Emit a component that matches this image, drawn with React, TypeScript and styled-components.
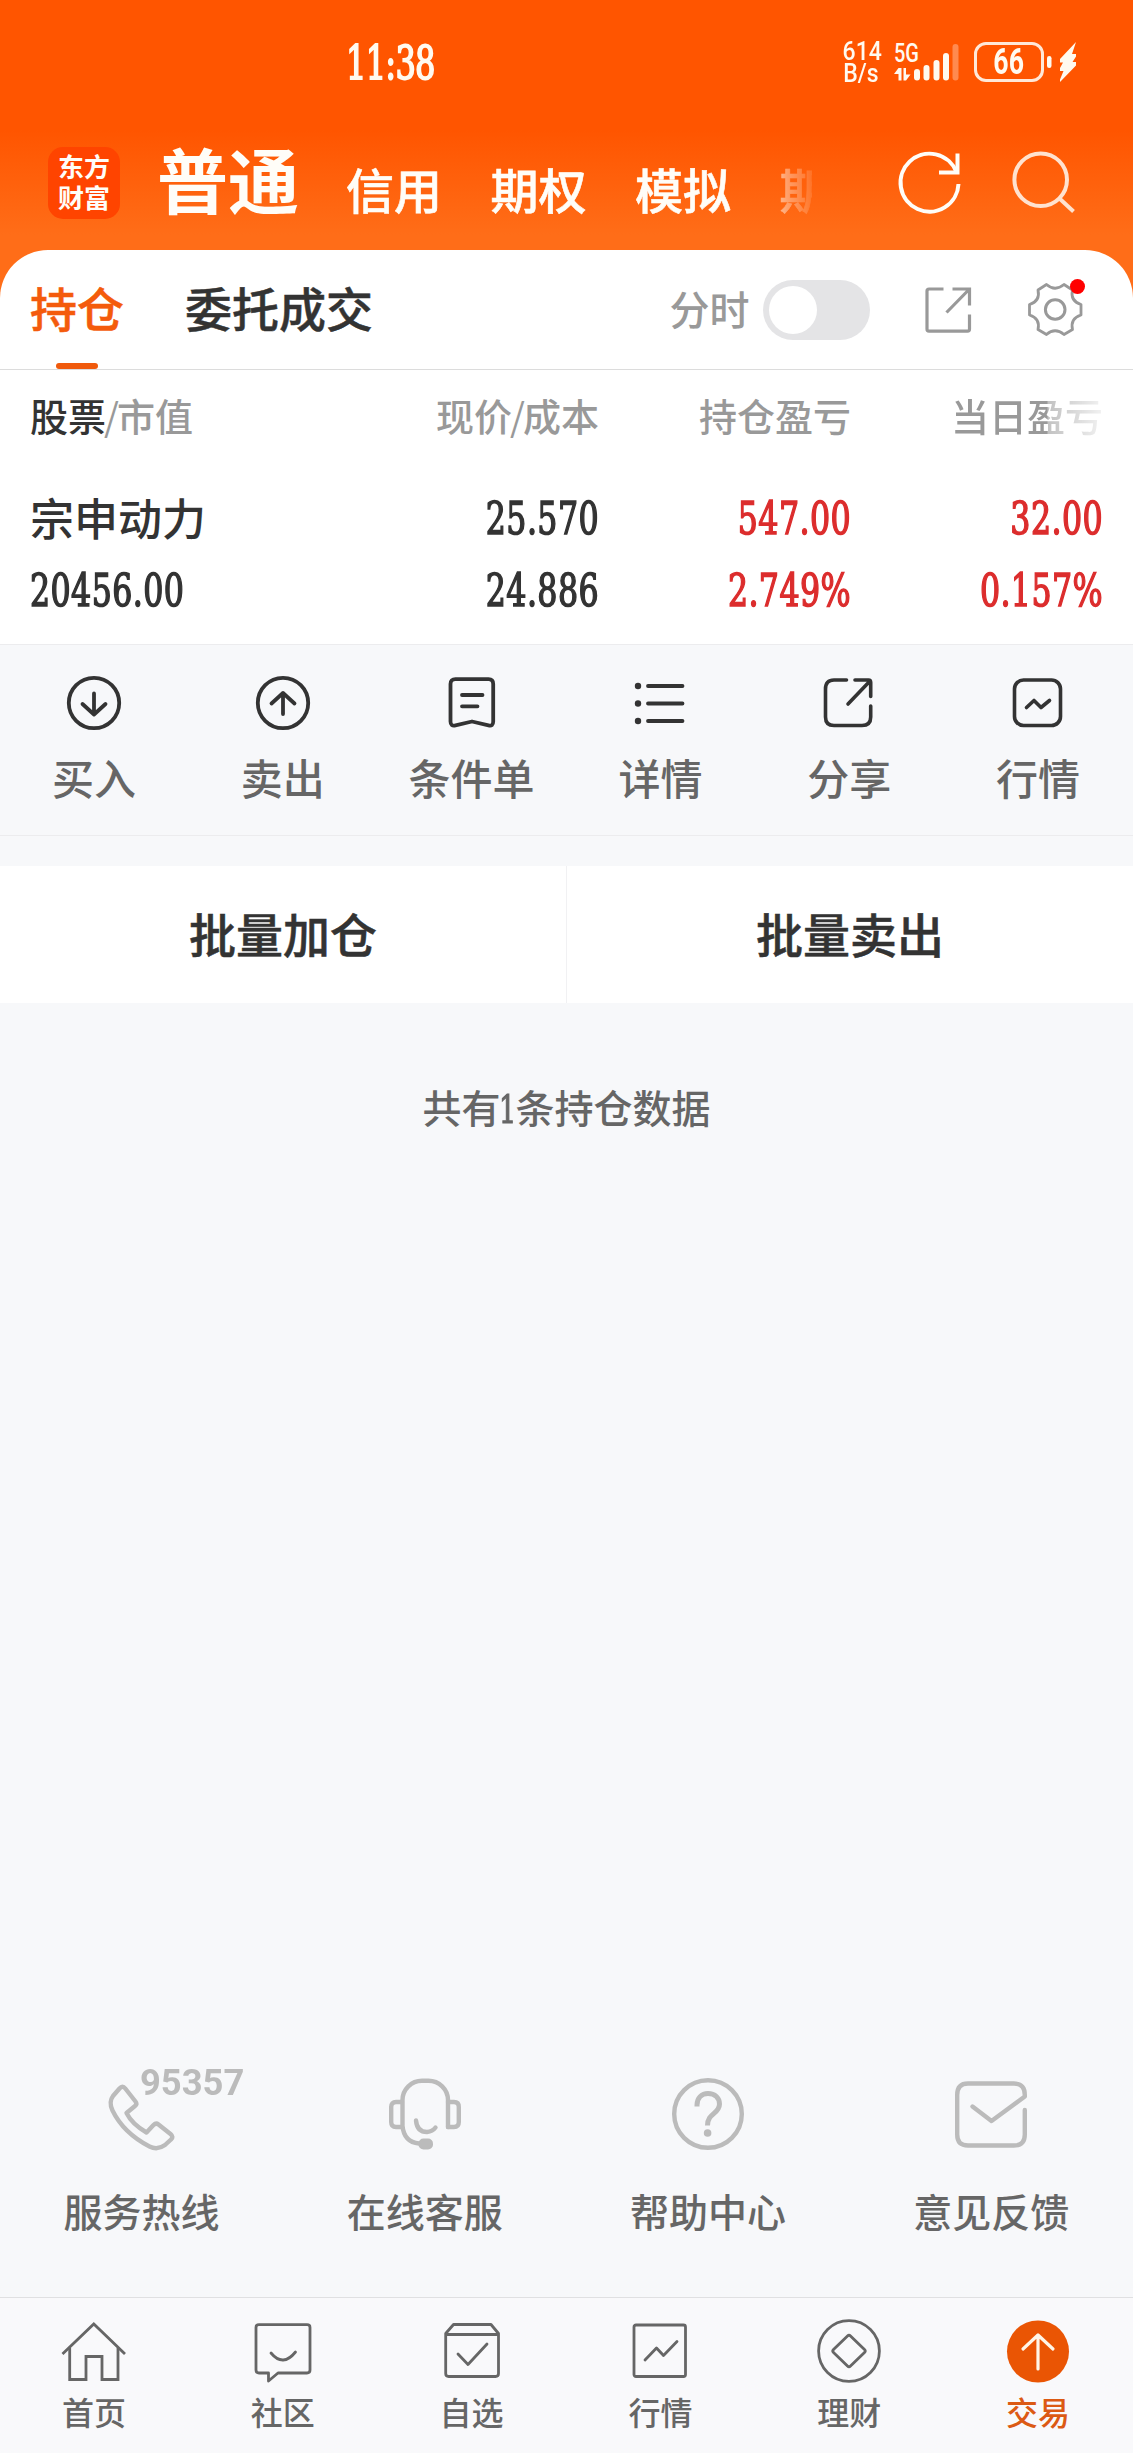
import React from "react";
import styled, { createGlobalStyle, css } from "styled-components";

const GlobalStyle = createGlobalStyle`
  *, *::before, *::after { box-sizing: border-box; }
  body {
    margin: 0;
    background: #f7f8fa;
    font-family: "Noto Sans CJK SC", sans-serif;
    font-weight: 500;
    color: #333;
  }
  svg { display: block; flex: none; }
`;

const numeric = css`
  font-family: "DejaVu Serif Condensed", "DejaVu Serif", serif;
  font-stretch: condensed;
  font-weight: 400;
`;

const Page = styled.div`
  width: 1133px;
  height: 2453px;
  display: flex;
  flex-direction: column;
  overflow: hidden;
  background: linear-gradient(#ff5500 0, #ff5500 130px, #ff6d18 235px, #ff6d18 320px, #f7f8fa 320px);
`;

/* ---------- status bar ---------- */

const StatusBar = styled.header`
  height: 125px;
  flex: none;
  display: flex;
  align-items: flex-start;
  color: #fffaf0;
`;

const Clock = styled.time`
  ${numeric}
  width: 88px;
  margin: 38px 0 0 346px;
  font-size: 47px;
  line-height: 50px;
  letter-spacing: -1px;
  white-space: nowrap;
  transform: scaleX(0.76);
  transform-origin: left center;
  -webkit-text-stroke: 1.8px currentColor;
`;

const NetSpeed = styled.div`
  width: 40px;
  margin: 41px 0 0 407px;
  font: 500 25px/22px Roboto, sans-serif;
  text-align: center;
  transform: scaleX(0.92);
`;

const Signal = styled.div`
  width: 65px;
  margin: 43px 0 0 13px;
`;

const BatteryBody = styled.div`
  width: 70px;
  height: 40px;
  margin: 42px 0 0 15px;
  display: flex;
  align-items: center;
  justify-content: center;
  border: 3.5px solid #ffe8d8;
  border-radius: 12px;
`;

const BatteryLevel = styled.span`
  font: 700 36px/36px Roboto, sans-serif;
  transform: scaleX(0.74);
`;

const Power = styled.div`
  margin: 42px 0 0 2px;
`;

/* ---------- account bar ---------- */

const AccountBar = styled.nav`
  height: 125px;
  flex: none;
  display: flex;
  align-items: flex-start;
  padding-left: 48px;
  color: #fffdf8;
`;

const Logo = styled.div`
  width: 72px;
  height: 72px;
  margin-top: 22px;
  padding-top: 3px;
  border-radius: 15px;
  background: #ff4400;
  font-size: 26px;
  font-weight: 700;
  line-height: 31px;
  text-align: center;
`;

const AccountTabs = styled.div`
  width: 655px;
  height: 125px;
  margin-left: 37px;
  display: flex;
  overflow: hidden;
  white-space: nowrap;
  mask-image: linear-gradient(90deg, #000 600px, rgba(0, 0, 0, 0.4) 630px, rgba(0, 0, 0, 0.12) 655px);
`;

const AccountTab = styled.span<{ $active?: boolean }>`
  flex: none;
  margin-right: ${(p) => (p.$active ? 47 : 48.5)}px;
  margin-top: ${(p) => (p.$active ? 2 : 28)}px;
  font-size: ${(p) => (p.$active ? 71 : 48)}px;
  font-weight: ${(p) => (p.$active ? 700 : 500)};
  line-height: ${(p) => (p.$active ? 100 : 70)}px;
  -webkit-text-stroke: ${(p) => (p.$active ? 0 : 0.6)}px currentColor;
`;

const BarIcon = styled.div<{ $left: number }>`
  margin: 27px 0 0 ${(p) => p.$left}px;
`;

/* ---------- holdings panel ---------- */

const Panel = styled.section`
  flex: none;
  height: 394px;
  border-radius: 48px 48px 0 0;
  background: #fff;
`;

const PanelTabs = styled.div`
  height: 120px;
  display: flex;
  align-items: flex-start;
  padding-left: 30px;
  border-bottom: 1px solid #dcdcdc;
`;

const PanelTab = styled.div<{ $active?: boolean }>`
  height: 119px;
  margin-right: 61px;
  padding-top: 22px;
  display: flex;
  flex-direction: column;
  justify-content: space-between;
  align-items: center;
  font-size: 47px;
  line-height: 70px;
  color: ${(p) => (p.$active ? "#f45b0c" : "#333")};
  -webkit-text-stroke: 0.5px currentColor;
  &::after {
    content: "";
    width: 42px;
    height: 6px;
    border-radius: 3px;
    background: ${(p) => (p.$active ? "#f05a0c" : "transparent")};
  }
`;

const Tools = styled.div`
  height: 119px;
  flex: 1;
  display: flex;
  align-items: center;
  justify-content: flex-end;
  padding-right: 51.5px;
  color: #999;
`;

const ToolLabel = styled.span`
  margin-top: -3px;
  font-size: 40px;
  line-height: 60px;
`;

const Toggle = styled.div`
  width: 107px;
  height: 60px;
  margin: 0 55px 0 13px;
  padding: 6px;
  border-radius: 30px;
  background: #e4e4e6;
  &::before {
    content: "";
    display: block;
    width: 48px;
    height: 48px;
    border-radius: 50%;
    background: #fff;
  }
`;

const Settings = styled.div`
  position: relative;
  margin-left: 57px;
  &::after {
    content: "";
    position: absolute;
    top: -4px;
    right: -3px;
    width: 15px;
    height: 15px;
    border-radius: 50%;
    background: #f00;
  }
`;

const Grid = styled.div`
  display: grid;
  grid-template-columns: 320px 249px 252px 252px;
  grid-template-rows: 107px 84px 60px;
  padding: 0 30px;
`;

const HeadCell = styled.div<{ $fade?: boolean }>`
  padding-top: 17px;
  font-size: 38px;
  line-height: 56px;
  color: #999;
  white-space: nowrap;
  text-align: right;
  &:first-child { text-align: left; }
  ${(p) => p.$fade && css`
    mask-image: linear-gradient(90deg, #000 196px, rgba(0, 0, 0, 0.6) 197px, rgba(0, 0, 0, 0.12) 252px);
  `}
  b { font-weight: 500; color: #333; }
`;

const Slash = styled.span`
  margin: 0 -2px;
  font-weight: 400;
`;

const StockName = styled.div`
  align-self: center;
  margin-top: -5px;
  font-size: 44px;
  line-height: 60px;
`;

const Value = styled.div<{ $left?: boolean; $up?: boolean }>`
  ${numeric}
  align-self: center;
  font-size: 44px;
  line-height: 60px;
  letter-spacing: 0.5px;
  white-space: nowrap;
  text-align: ${(p) => (p.$left ? "left" : "right")};
  transform: scaleX(0.8);
  transform-origin: ${(p) => (p.$left ? "left" : "right")} center;
  color: ${(p) => (p.$up ? "#dc2d2d" : "#333")};
  -webkit-text-stroke: 1.5px currentColor;
`;

/* ---------- actions ---------- */

const Actions = styled.div`
  height: 192px;
  flex: none;
  display: grid;
  grid-template-columns: repeat(6, 1fr);
  background: #f7f8fa;
  border-top: 1px solid #ececee;
  border-bottom: 1px solid #ececee;
`;

const Action = styled.div`
  display: flex;
  flex-direction: column;
  align-items: center;
  padding: 31px 1px 0 0;
  gap: 16px;
  font-size: 42px;
  line-height: 62px;
  color: #666;
  svg { color: #333; }
`;

const BatchRow = styled.div`
  height: 167px;
  flex: none;
  display: grid;
  grid-template-columns: 567px 566px;
  border-top: 30px solid #f7f8fa;
`;

const BatchButton = styled.button`
  border: 0;
  border-right: 1px solid #f1f1f3;
  background: #fff;
  padding: 0 0 4px;
  font: 500 47px/70px "Noto Sans CJK SC", sans-serif;
  color: #333;
  -webkit-text-stroke: 0.5px currentColor;
  &:last-child { border-right: 0; }
`;

const Body = styled.div`
  flex: 1;
  display: flex;
  flex-direction: column;
  justify-content: space-between;
  background: #f7f8fa;
`;

const Summary = styled.p`
  margin: 75px 0 0;
  font-size: 39px;
  line-height: 56px;
  text-align: center;
  color: #666;
`;

const SummaryCount = styled.span`
  ${numeric}
  display: inline-block;
  width: 14px;
  margin-right: 1px;
  font-size: 40px;
  text-indent: -5px;
  transform: scaleX(0.75);
  -webkit-text-stroke: 1.2px currentColor;
`;

const Support = styled.div`
  display: grid;
  grid-template-columns: repeat(4, 1fr);
  margin-bottom: 59px;
`;

const SupportItem = styled.div`
  position: relative;
  display: flex;
  flex-direction: column;
  align-items: center;
  gap: 32px;
  font-size: 39px;
  line-height: 56px;
  color: #666;
  svg { color: #bbb; }
`;

const HotlineNumber = styled.span`
  position: absolute;
  left: 140px;
  top: -15px;
  font: 700 37.500px/38px Roboto, sans-serif;
  color: #bbb;
  transform: scaleX(0.97);
  transform-origin: left center;
`;

const TabBar = styled.nav`
  height: 156px;
  flex: none;
  display: grid;
  grid-template-columns: repeat(6, 1fr);
  border-top: 1px solid #e0e0e2;
  background: #f9f9fb;
`;

const TabItem = styled.div<{ $active?: boolean }>`
  display: flex;
  flex-direction: column;
  align-items: center;
  padding: 21px 1px 0 0;
  gap: 4px;
  font-size: 32px;
  line-height: 48px;
  color: ${(p) => (p.$active ? "#dc5a14" : "#666")};
`;

/* ---------- icons ---------- */

type IconProps = { w: number; h: number; stroke?: number; children: React.ReactNode };

const Icon = ({ w, h, stroke = 4, children }: IconProps) => (
  <svg
    width={w}
    height={h}
    viewBox={`0 0 ${w} ${h}`}
    fill="none"
    stroke="currentColor"
    strokeWidth={stroke}
    strokeLinecap="round"
    strokeLinejoin="round"
    overflow="visible"
  >
    {children}
  </svg>
);

const SignalIcon = () => (
  <svg width="65" height="40" viewBox="0 0 65 40" fill="currentColor" overflow="visible">
    <text x="0" y="19" fontSize="25" fontWeight="500" fontFamily="Roboto, sans-serif" textLength="25" lengthAdjust="spacingAndGlyphs">5G</text>
    <path d="M4.5 25h3v12.5h-3V31H0z M9.5 25h2.5v6.500h4.500l-4.500 6H9.500z" />
    <rect x="20" y="26" width="6" height="11.500" rx="3" />
    <rect x="29.500" y="22" width="6" height="15.500" rx="3" />
    <rect x="39.500" y="17" width="6" height="20.500" rx="3" />
    <rect x="49" y="10" width="6" height="27.500" rx="3" />
    <rect x="58.500" y="1" width="6" height="36.500" rx="3" fill="#ff8a50" />
  </svg>
);

const PowerIcon = () => (
  <svg width="30" height="40" viewBox="0 0 30 40" fill="currentColor">
    <rect x="1" y="14" width="4.500" height="12" rx="2.250" />
    <path d="M30 0L14 17v3.500h3L14 26v3h3.500L14 37.500V40L30 23.500V20h-3.500L30 14.500V12h-4z" />
  </svg>
);

const RefreshIcon = () => (
  <Icon w={62} h={62}>
    <g strokeLinecap="butt" strokeLinejoin="miter">
      <path d="M59.500 32A29 29 0 1 1 57.500 20" />
      <path d="M58.500 1.500V20.500H40" />
    </g>
  </Icon>
);

const SearchIcon = () => (
  <Icon w={62} h={62}>
    <g stroke="#ffe2cf" strokeLinecap="butt">
      <circle cx="27.700" cy="27.700" r="26.300" />
      <path d="M46.500 46.500L60.500 59.500" />
    </g>
  </Icon>
);

const ExportIcon = () => (
  <Icon w={46} h={46} stroke={3.2}>
    <g strokeLinecap="butt" strokeLinejoin="miter">
      <path d="M18.500 2H4Q2 2 2 4V42Q2 44.200 4 44.200H42.500Q44.500 44.200 44.500 42V27.500" />
      <path d="M27.500 2H44.500V18.500M44 2.500L21.500 25.500" />
    </g>
  </Icon>
);

const GearIcon = () => (
  <Icon w={54} h={53} stroke={2.8}>
    <path d="M18.500 1.500Q27 9 36 1.500L44.500 7Q42 18 53 21.500V32Q42 35.500 44.500 46.500L36 51.500Q27 44 18.500 51.500L10 46.500Q12.500 35.500 1.500 32V21.500Q12.500 18 10 7Z" />
    <circle cx="27.200" cy="26.500" r="9.800" strokeWidth="3" />
  </Icon>
);

const BuyIcon = () => (
  <Icon w={54} h={54} stroke={3.8}>
    <circle cx="27" cy="27" r="25.200" />
    <path d="M27 17.500V38.500M15.500 28L27 38.500L38.500 28" />
  </Icon>
);

const SellIcon = () => (
  <Icon w={54} h={54} stroke={3.8}>
    <circle cx="27" cy="27" r="25.200" />
    <path d="M27 38V17M15.500 27.500L27 17L38.500 27.500" />
  </Icon>
);

const OrderIcon = () => (
  <Icon w={54} h={54} stroke={3.8}>
    <path d="M10.500 3.200H43.500Q48.200 3.200 48.200 8V45.500Q48.200 50.500 43.500 49.300L27 45.500L10.500 49.300Q5.500 50.500 5.500 45.500V8Q5.500 3.200 10.500 3.200Z" />
    <path d="M17 19H37.500M17 30.300H32.500" />
  </Icon>
);

const ListIcon = () => (
  <Icon w={54} h={54} stroke={3.8}>
    <path d="M15 10H49.500M15 27.500H49.500M15 45H49.500" />
    <g fill="currentColor" stroke="none">
      <circle cx="5" cy="10" r="3.200" />
      <circle cx="5" cy="27.500" r="3.200" />
      <circle cx="5" cy="45" r="3.200" />
    </g>
  </Icon>
);

const ShareIcon = () => (
  <Icon w={54} h={54} stroke={3.6}>
    <path d="M24.500 4H12Q3.500 4 3.500 13V41Q3.500 49.500 12 49.500H40Q48.700 49.500 48.700 41V30" />
    <path d="M33 4H46.500Q48.700 4 48.700 6.500V20.500M48 5L26 28" />
  </Icon>
);

const QuoteIcon = () => (
  <Icon w={54} h={54} stroke={3.6}>
    <rect x="3.500" y="4" width="46" height="45.500" rx="9" />
    <path d="M15.500 31.500L23 24.500L30 31.500L38.500 24.500" />
  </Icon>
);

const PhoneIcon = () => (
  <Icon w={72} h={72} stroke={4.4}>
    <path d="M13.500 10.500Q16.500 7 19.300 10.500L29.500 23.500Q31.500 26 29 28L20.500 35Q26 46 40.500 54.500L47.500 47Q50 44.500 52.500 46.500L64.500 56Q68 59 65 61.500L59 67Q51.500 72.500 43.500 68.500Q17.500 55 6.500 32.500Q2.500 24 7 18Z" />
  </Icon>
);

const HeadsetIcon = () => (
  <Icon w={72} h={72} stroke={4.4}>
    <path d="M59 49V22A19.500 19.500 0 0 0 39.500 2.800H33A19.500 19.500 0 0 0 13.500 22V48Q15 64 30 65.500" />
    <path d="M13 24H7Q2.200 24 2.200 29V44Q2.200 49 7 49H13M59 24H65Q69.800 24 69.800 29V44Q69.800 49 65 49H59" />
    <path d="M27 42.500Q28 54 38 54Q43.500 53.500 46.500 49.500" />
    <rect x="29.500" y="60.500" width="14.500" height="11" rx="5" fill="currentColor" stroke="none" />
  </Icon>
);

const HelpIcon = () => (
  <Icon w={72} h={72} stroke={4.4}>
    <circle cx="36" cy="36" r="33.800" />
    <path strokeLinecap="butt" strokeWidth="5" d="M25 28.500V27C25 20 29.500 15.500 36 15.500C43 15.500 47.500 20 47.500 26C47.500 36 35.500 35 35.500 47.500" />
    <circle cx="35.600" cy="55" r="3.800" fill="currentColor" stroke="none" />
  </Icon>
);

const MailIcon = () => (
  <Icon w={72} h={72} stroke={4.400}>
    <path d="M69.800 32V56.500Q69.800 67.500 59 67.500H13Q2.200 67.500 2.200 56.500V17Q2.200 5.500 13 5.500H59Q69.800 5.500 69.800 17V18.500L36.500 43L17.500 28.500" />
  </Icon>
);

const HomeIcon = () => (
  <Icon w={64} h={64} stroke={2.8}>
    <g strokeLinecap="butt" strokeLinejoin="miter">
      <path d="M0.500 35L31.800 5L63 35" />
      <path d="M7.700 29V60.500H24V37.500H40V60.500H56V29" />
    </g>
  </Icon>
);

const CommunityIcon = () => (
  <Icon w={64} h={64} stroke={2.8}>
    <path d="M8 5.700H56Q59 5.700 59 8.500V51Q59 54 56 54H27L17.500 62V54H8Q5 54 5 51V8.500Q5 5.700 8 5.700Z" />
    <path d="M20 34Q32 48.500 44.500 33" />
  </Icon>
);

const WatchlistIcon = () => (
  <Icon w={64} h={64} stroke={2.8}>
    <path d="M5.700 14.500L13.500 5.500H51L58.500 14.500V54.500Q58.500 57.500 55.500 57.500H8.700Q5.700 57.500 5.700 54.500ZM5.700 15.500H58.500" />
    <path d="M18 35L28 45.500L47 25" />
  </Icon>
);

const MarketIcon = () => (
  <Icon w={64} h={64} stroke={2.8}>
    <rect x="6" y="6" width="51.500" height="51.500" rx="2" />
    <path d="M17 41L28.500 29L35.500 36.500L49 22.500" />
  </Icon>
);

const WealthIcon = () => (
  <Icon w={64} h={64} stroke={2.8}>
    <circle cx="32" cy="32" r="30.400" />
    <path d="M30.500 17Q32 15.500 33.500 17L47.500 30.500Q49 32 47.500 33.500L33.500 47Q32 48.500 30.500 47L16.500 33.500Q15 32 16.500 30.500Z" />
  </Icon>
);

const TradeIcon = () => (
  <Icon w={64} h={64} stroke={3.2}>
    <circle cx="32" cy="32.500" r="31" fill="#ea5504" stroke="none" />
    <path d="M32 50V16M17 30L32 16L47 30" stroke="#fff6e8" />
  </Icon>
);

const actions = [
  { label: "买入", icon: <BuyIcon /> },
  { label: "卖出", icon: <SellIcon /> },
  { label: "条件单", icon: <OrderIcon /> },
  { label: "详情", icon: <ListIcon /> },
  { label: "分享", icon: <ShareIcon /> },
  { label: "行情", icon: <QuoteIcon /> },
];

const support = [
  { label: "服务热线", icon: <PhoneIcon />, note: "95357" },
  { label: "在线客服", icon: <HeadsetIcon /> },
  { label: "帮助中心", icon: <HelpIcon /> },
  { label: "意见反馈", icon: <MailIcon /> },
];

const tabs = [
  { label: "首页", icon: <HomeIcon /> },
  { label: "社区", icon: <CommunityIcon /> },
  { label: "自选", icon: <WatchlistIcon /> },
  { label: "行情", icon: <MarketIcon /> },
  { label: "理财", icon: <WealthIcon /> },
  { label: "交易", icon: <TradeIcon />, active: true },
];

export default function App() {
  return (
    <>
      <GlobalStyle />
      <Page>
        <StatusBar>
          <Clock>11:38</Clock>
          <NetSpeed>614<br />B/s</NetSpeed>
          <Signal><SignalIcon /></Signal>
          <BatteryBody><BatteryLevel>66</BatteryLevel></BatteryBody>
          <Power><PowerIcon /></Power>
        </StatusBar>

        <AccountBar>
          <Logo>东方<br />财富</Logo>
          <AccountTabs>
            <AccountTab $active>普通</AccountTab>
            <AccountTab>信用</AccountTab>
            <AccountTab>期权</AccountTab>
            <AccountTab>模拟</AccountTab>
            <AccountTab>期</AccountTab>
          </AccountTabs>
          <BarIcon $left={87}><RefreshIcon /></BarIcon>
          <BarIcon $left={52}><SearchIcon /></BarIcon>
        </AccountBar>

        <Panel>
          <PanelTabs>
            <PanelTab $active>持仓</PanelTab>
            <PanelTab>委托成交</PanelTab>
            <Tools>
              <ToolLabel>分时</ToolLabel>
              <Toggle />
              <ExportIcon />
              <Settings><GearIcon /></Settings>
            </Tools>
          </PanelTabs>
          <Grid>
            <HeadCell><b>股票</b><Slash>/</Slash>市值</HeadCell>
            <HeadCell>现价<Slash>/</Slash>成本</HeadCell>
            <HeadCell>持仓盈亏</HeadCell>
            <HeadCell $fade>当日盈亏</HeadCell>
            <StockName>宗申动力</StockName>
            <Value>25.570</Value>
            <Value $up>547.00</Value>
            <Value $up>32.00</Value>
            <Value $left>20456.00</Value>
            <Value>24.886</Value>
            <Value $up>2.749%</Value>
            <Value $up>0.157%</Value>
          </Grid>
        </Panel>

        <Actions>
          {actions.map((a) => (
            <Action key={a.label}>{a.icon}{a.label}</Action>
          ))}
        </Actions>

        <BatchRow>
          <BatchButton>批量加仓</BatchButton>
          <BatchButton>批量卖出</BatchButton>
        </BatchRow>

        <Body>
          <Summary>共有<SummaryCount>1</SummaryCount>条持仓数据</Summary>
          <Support>
            {support.map((s) => (
              <SupportItem key={s.label}>
                {s.icon}
                {s.note && <HotlineNumber>{s.note}</HotlineNumber>}
                {s.label}
              </SupportItem>
            ))}
          </Support>
        </Body>

        <TabBar>
          {tabs.map((t) => (
            <TabItem key={t.label} $active={t.active}>{t.icon}{t.label}</TabItem>
          ))}
        </TabBar>
      </Page>
    </>
  );
}
